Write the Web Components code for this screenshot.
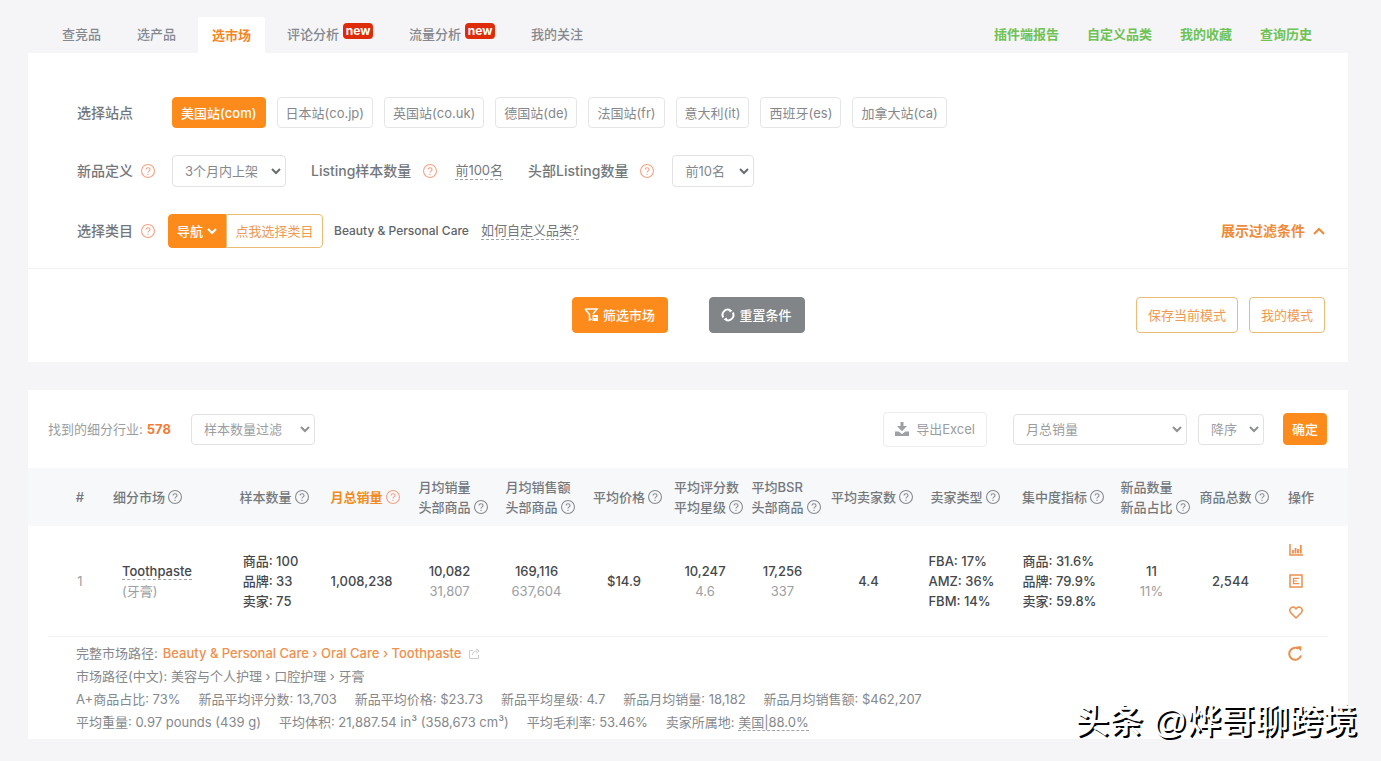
<!DOCTYPE html>
<html lang="zh-CN">
<head>
<meta charset="utf-8">
<title>选市场</title>
<style>
  body { margin: 0; background: #f5f5f8; color: #7b7f84; font: 13px/20px Inter, "Noto Sans CJK SC", sans-serif; }
</style>
</head>
<body>
<market-page></market-page>
<script>
const define = (name, css, html) => {
  const tpl = document.createElement('template');
  tpl.innerHTML = `<style>*{box-sizing:border-box}${css}</style>${html}`;
  customElements.define(name, class extends HTMLElement {
    constructor() {
      super();
      this.attachShadow({ mode: 'open' }).append(tpl.content.cloneNode(true));
    }
  });
};

const controls = `
  button { font: inherit; cursor: pointer; border-radius: 4px; border: 1px solid #e4e5e7; background: #fff; color: #85888c; padding: 0 8px; white-space: nowrap; display: inline-flex; align-items: center; justify-content: center; gap: 4px; }
  button.primary { background: #fd8b1b; border-color: #fd8b1b; color: #fff; font-weight: 500; }
  button.grey { background: #818587; border-color: #818587; color: #fff; font-weight: 500; }
  button.line { border-color: #e9bb74; color: #ef9a52; }
  .select { display: inline-grid; align-items: center; }
  .select > * { grid-area: 1 / 1; }
  .select svg { justify-self: end; margin-right: 5px; pointer-events: none; }
  select { appearance: none; width: 100%; height: 32px; font: inherit; color: #85888c; background: #fff; border: 1px solid #e1e2e5; border-radius: 4px; padding: 0 24px 0 12px; }
  a { color: inherit; text-decoration: none; }
  a.dash { border-bottom: 1px dashed #a0a3a8; line-height: 17px; }
`;
const caret = (c = '#686c70') => `<svg width="10" height="8" viewBox="0 0 10 8" fill="none" stroke="${c}" stroke-width="2"><path d="M1 2l4 4 4-4"/></svg>`;

define('help-icon', `
  :host { display: inline-block; width: 14px; height: 14px; vertical-align: -2px; }
  svg { display: block; }
`, `<svg width="14" height="14" viewBox="0 0 13 13" fill="none" stroke="currentColor"><circle cx="6.5" cy="6.5" r="6"/><path d="M4.7 5.2c0-2.4 3.7-2.3 3.7-.1 0 1.3-1.9 1.3-1.9 2.8M6.5 9v1.2"/></svg>`);

define('new-badge', `
  :host { display: block; width: 30px; height: 16px; margin: 0 0 6px 4px; border-radius: 4px; background: #de2b0a; color: #fff; font: bold 12px/15px Inter, sans-serif; text-align: center; }
`, `<slot></slot>`);

define('nav-tab', `
  :host { display: block; }
  a { display: flex; align-items: center; height: 36px; padding: 0 14px 2px; color: #85888e; text-decoration: none; font-weight: 500; border-radius: 2px 2px 0 0; white-space: nowrap; }
  :host([active]) a { background: #fff; color: #f6851f; font-weight: bold; padding-bottom: 0; }
`, `<a href="#"><slot></slot></a>`);

define('top-nav', `
  :host { display: flex; justify-content: space-between; align-items: flex-end; padding: 17px 36px 0 20px; }
  nav { display: flex; gap: 8px; }
  .links { gap: 28px; height: 36px; padding-bottom: 2px; align-items: center; }
  .links a { color: #6fc253; font-weight: bold; text-decoration: none; }
`, `<nav>
  <nav-tab>查竞品</nav-tab><nav-tab>选产品</nav-tab><nav-tab active>选市场</nav-tab>
  <nav-tab>评论分析<new-badge>new</new-badge></nav-tab>
  <nav-tab>流量分析<new-badge>new</new-badge></nav-tab>
  <nav-tab>我的关注</nav-tab>
</nav>
<nav class="links"><a href="#">插件端报告</a><a href="#">自定义品类</a><a href="#">我的收藏</a><a href="#">查询历史</a></nav>`);

define('filter-panel', controls + `
  :host { display: block; background: #fff; }
  .rows { padding: 44px 23px 20px 49px; border-bottom: 1px solid #f0f1f2; display: flex; flex-direction: column; gap: 27px; }
  .row { display: flex; align-items: center; min-height: 31px; }
  .label { display: flex; align-items: center; gap: 8px; font-size: 14px; font-weight: 500; color: #73777b; white-space: nowrap; }
  .label.first { flex: 0 0 95px; }
  .label.cat { flex-basis: 91px; }
  help-icon { color: #f3a184; }
  .sites { display: flex; gap: 11px; }
  .sites button { height: 31px; }
  .mid { margin-left: 25px; gap: 12px; }
  .dash { margin-left: 18px; color: #74777b; }
  .group { display: flex; margin-right: 11px; }
  .group button { height: 34px; }
  .group .primary { border-radius: 4px 0 0 4px; width: 58px; }
  .group .line { border-radius: 0 4px 4px 0; width: 97px; }
  .cat-name { color: #606468; font-size: 12px; font-weight: 500; }
  .how { margin-left: 12px; }
  .toggle { margin-left: auto; border: 0; padding: 0; gap: 8px; color: #f08a38; font-size: 14px; font-weight: bold; }
  .actions { display: grid; grid-template-columns: 1fr auto 1fr; padding: 28px 23px 29px; }
  .actions button { height: 36px; }
  .center { display: flex; gap: 41px; grid-column: 2; }
  .center button { width: 96px; }
  .right { display: flex; gap: 11px; justify-content: flex-end; }
  .right button { padding: 0 11px; }
`, `<div class="rows">
  <div class="row"><span class="label first">选择站点</span>
    <div class="sites"><button class="primary">美国站(com)</button><button>日本站(co.jp)</button><button>英国站(co.uk)</button><button>德国站(de)</button><button>法国站(fr)</button><button>意大利(it)</button><button>西班牙(es)</button><button>加拿大站(ca)</button></div>
  </div>
  <div class="row"><label class="label first" for="fresh">新品定义<help-icon></help-icon></label>
    <span class="select" style="width:114px"><select id="fresh"><option>3个月内上架</option></select>${caret()}</span>
    <span class="label mid">Listing样本数量<help-icon></help-icon></span><a class="dash" href="#">前100名</a>
    <label class="label mid" for="head">头部Listing数量<help-icon></help-icon></label>
    <span class="select" style="width:82px;margin-left:18px"><select id="head"><option>前10名</option></select>${caret()}</span>
  </div>
  <div class="row"><span class="label first cat">选择类目<help-icon></help-icon></span>
    <div class="group"><button class="primary">导航${caret('#fff')}</button><button class="line">点我选择类目</button></div>
    <span class="cat-name">Beauty &amp; Personal Care</span><a class="dash how" href="#">如何自定义品类?</a>
    <button class="toggle">展示过滤条件<svg width="12" height="10" viewBox="0 0 12 10" fill="none" stroke="currentColor" stroke-width="2"><path d="M1 8l5-5 5 5"/></svg></button>
  </div>
</div>
<div class="actions">
  <div class="center">
    <button class="primary"><svg width="15" height="14" viewBox="0 0 15 14" fill="none" stroke="#fff" stroke-width="1.5"><path d="M1 1h12L9 6M1 1l4.5 5.5V12l2-1"/><path d="M8.5 7h5.5v6H8.5z" fill="#fff" stroke="none"/><path d="M9.5 9.5h3" stroke="#fd8b1b" stroke-width="1"/></svg>筛选市场</button>
    <button class="grey"><svg width="14" height="14" viewBox="0 0 14 14" fill="none" stroke="#fff" stroke-width="2"><path d="M2.2 9.5A5.3 5.3 0 0 1 9 2.1M11.8 4.5A5.3 5.3 0 0 1 5 11.9"/><path d="M8 .5l3.500 2.200L8.5 4.500zM6 9.500v4L2.500 11.300z" fill="#fff" stroke="none"/></svg>重置条件</button>
  </div>
  <div class="right"><button class="line">保存当前模式</button><button class="line">我的模式</button></div>
</div>`);

define('result-toolbar', controls + `
  :host { display: flex; align-items: center; height: 78px; padding: 0 21px 0 20px; color: #9a9da1; }
  b { color: #f27b35; margin: 0 20px 0 4px; }
  button, select { color: #9a9da1; }
  select { height: 31px; }
  .export { height: 35px; padding: 0 11px; gap: 7px; margin: 0 26px 0 auto; border-color: #ebecee; }
  .ok { width: 44px; height: 32px; padding: 0; margin-left: 19px; }
`, `<label for="sample">找到的细分行业:</label><b>578</b>
  <span class="select" style="width:124px"><select id="sample"><option>样本数量过滤</option></select>${caret('#8d9094')}</span>
  <button class="export"><svg width="14" height="14" viewBox="0 0 14 14" fill="#9ca1a6"><path d="M5.5 0h3v4H12L7 9.3 2 4h3.500z"/><path d="M0 9.500h3.500L7 12l3.500-2.500H14V14H0z"/></svg>导出Excel</button>
  <span class="select" style="width:174px"><select aria-label="排序字段"><option>月总销量</option></select>${caret('#8d9094')}</span>
  <span class="select" style="width:66px;margin-left:11px"><select aria-label="排序方向"><option>降序</option></select>${caret('#8d9094')}</span>
  <button class="primary ok">确定</button>`);

const q = '<help-icon></help-icon>';
const widths = [76, 124, 92, 90, 86, 88, 87, 75, 80, 92, 94, 102, 82, 76, 76];
define('result-table', controls + `
  :host { display: block; }
  table { width: 100%; table-layout: fixed; border-collapse: collapse; text-align: center; }
  th, td { padding: 0; white-space: nowrap; }
  th { height: 58px; background: #f7f8fa; color: #74787d; font-weight: 500; }
  th span, td span { display: inline-block; text-align: left; }
  th help-icon { color: #868a8e; margin-left: 3px; }
  th.sorted { color: #f08c20; font-weight: bold; }
  th.sorted help-icon { color: #f3a184; }
  tr > :first-child { padding-left: 28px; }
  tr > :nth-child(2) { text-align: left; padding-left: 9px; }
  tr > :last-child { padding-right: 18px; }
  td { height: 110px; color: #45484b; padding-right: 7px; font-weight: 500; }
  td.market { padding-left: 18px; }
  tr > td.no { padding-right: 0; }
  td i, td.no { font-style: normal; font-weight: normal; color: #9b9ea2; }
  tr > td.tools { padding-right: 29px; color: #ec8f4b; }
  td.tools div { display: flex; flex-direction: column; align-items: center; gap: 17px; }
  td.tools button, .refresh { border: 0; padding: 0; background: none; color: #ec8f4b; height: 14px; }
  tr > td.more { height: auto; padding: 0 20px; text-align: left; color: #85888c; font-weight: normal; }
  .detail { display: flex; justify-content: space-between; align-items: flex-start; border-top: 1px solid #f0f1f2; padding: 5px 25px 5px 28px; line-height: 23px; }
  .detail p { margin: 0; display: flex; align-items: center; }
  .facts { gap: 18px; }
  .path { color: #ef904e; font-weight: 500; margin: 0 8px 0 5px; }
  .refresh { margin-top: 4px; }
`, `<table>
<colgroup>${widths.map(w => `<col style="width:${w}px">`).join('')}</colgroup>
<thead><tr><th>#</th><th>细分市场${q}</th><th>样本数量${q}</th><th class="sorted">月总销量${q}</th><th><span>月均销量<br>头部商品${q}</span></th><th><span>月均销售额<br>头部商品${q}</span></th><th>平均价格${q}</th><th><span>平均评分数<br>平均星级${q}</span></th><th><span>平均BSR<br>头部商品${q}</span></th><th>平均卖家数${q}</th><th>卖家类型${q}</th><th>集中度指标${q}</th><th><span>新品数量<br>新品占比${q}</span></th><th>商品总数${q}</th><th>操作</th></tr></thead>
<tbody><tr>
<td class="no">1</td><td class="market"><a class="dash" href="#">Toothpaste</a><br><i>(牙膏)</i></td>
<td><span>商品: 100<br>品牌: 33<br>卖家: 75</span></td><td>1,008,238</td><td>10,082<br><i>31,807</i></td><td>169,116<br><i>637,604</i></td><td>$14.9</td><td>10,247<br><i>4.6</i></td><td>17,256<br><i>337</i></td><td>4.4</td>
<td><span>FBA: 17%<br>AMZ: 36%<br>FBM: 14%</span></td><td><span>商品: 31.6%<br>品牌: 79.9%<br>卖家: 59.8%</span></td><td>11<br><i>11%</i></td><td>2,544</td>
<td class="tools"><div>
<button aria-label="图表"><svg width="14" height="12" viewBox="0 0 14 12" fill="none" stroke="currentColor" stroke-width="1.500"><path d="M1 0v11h13"/><path d="M4 9.500V6M6.500 9.500V4M9 9.500V5M11.800 9.500V1" stroke-width="1.800"/></svg></button>
<button aria-label="报告"><svg width="14" height="14" viewBox="0 0 14 14" fill="none" stroke="currentColor" stroke-width="1.500"><path d="M1 1h12v12H1z"/><path d="M4 4.300h6M4 7h4M4 9.700h6M4.500 4v6" stroke-width="1.200"/></svg></button>
<button aria-label="收藏"><svg width="14" height="13" viewBox="0 0 14 13" fill="none" stroke="currentColor" stroke-width="1.500" stroke-linejoin="round"><path d="M7 12L2 7C-.8 4 2 1 4 1c1.500 0 2.500 1 3 2 .5-1 1.500-2 3-2 2 0 4.800 3 2 6z"/></svg></button>
</div></td></tr>
<tr><td class="more" colspan="15"><div class="detail"><div>
<p>完整市场路径: <a class="path" href="#">Beauty &amp; Personal Care › Oral Care › Toothpaste</a><svg width="11" height="11" viewBox="0 0 11 11" fill="none" stroke="#c9cbce"><path d="M4 2.500H.5v8h9V7M3.500 7c0-3 1.500-4 5-4M7 .8L10 3 7 5.500"/></svg></p>
<p>市场路径(中文): 美容与个人护理 › 口腔护理 › 牙膏</p>
<p class="facts"><span>A+商品占比: 73%</span><span>新品平均评分数: 13,703</span><span>新品平均价格: $23.73</span><span>新品平均星级: 4.7</span><span>新品月均销量: 18,182</span><span>新品月均销售额: $462,207</span></p>
<p class="facts"><span>平均重量: 0.97 pounds (439 g)</span><span>平均体积: 21,887.54 in³ (358,673 cm³)</span><span>平均毛利率: 53.46%</span><span>卖家所属地: <a class="dash" href="#">美国|88.0%</a></span></p>
</div><button class="refresh" aria-label="刷新"><svg width="15" height="15" viewBox="0 0 15 15" fill="none" stroke="currentColor" stroke-width="2"><path d="M13 9.500A6 6 0 1 1 10.500 2.700"/><path d="M8 .5l5.500-.3-.5 5z" fill="currentColor" stroke="none"/></svg></button></div></td></tr></tbody></table>`);

define('result-panel', `:host { display: block; background: #fff; margin-top: 28px; }`,
  `<result-toolbar></result-toolbar><result-table></result-table>`);

define('author-mark', `
  :host { position: absolute; right: 24px; bottom: 20px; color: #fff; font: 500 34px/40px "Liberation Sans", "Noto Sans CJK SC", sans-serif; text-shadow: 2px 2px 0 #000; white-space: nowrap; pointer-events: none; }
`, `<slot></slot>`);

define('market-page', `
  :host { display: block; position: relative; padding: 0 33px 22px 28px; }
`, `<top-nav></top-nav><filter-panel></filter-panel><result-panel></result-panel><author-mark>头条 @烨哥聊跨境</author-mark>`);
</script>
</body>
</html>
